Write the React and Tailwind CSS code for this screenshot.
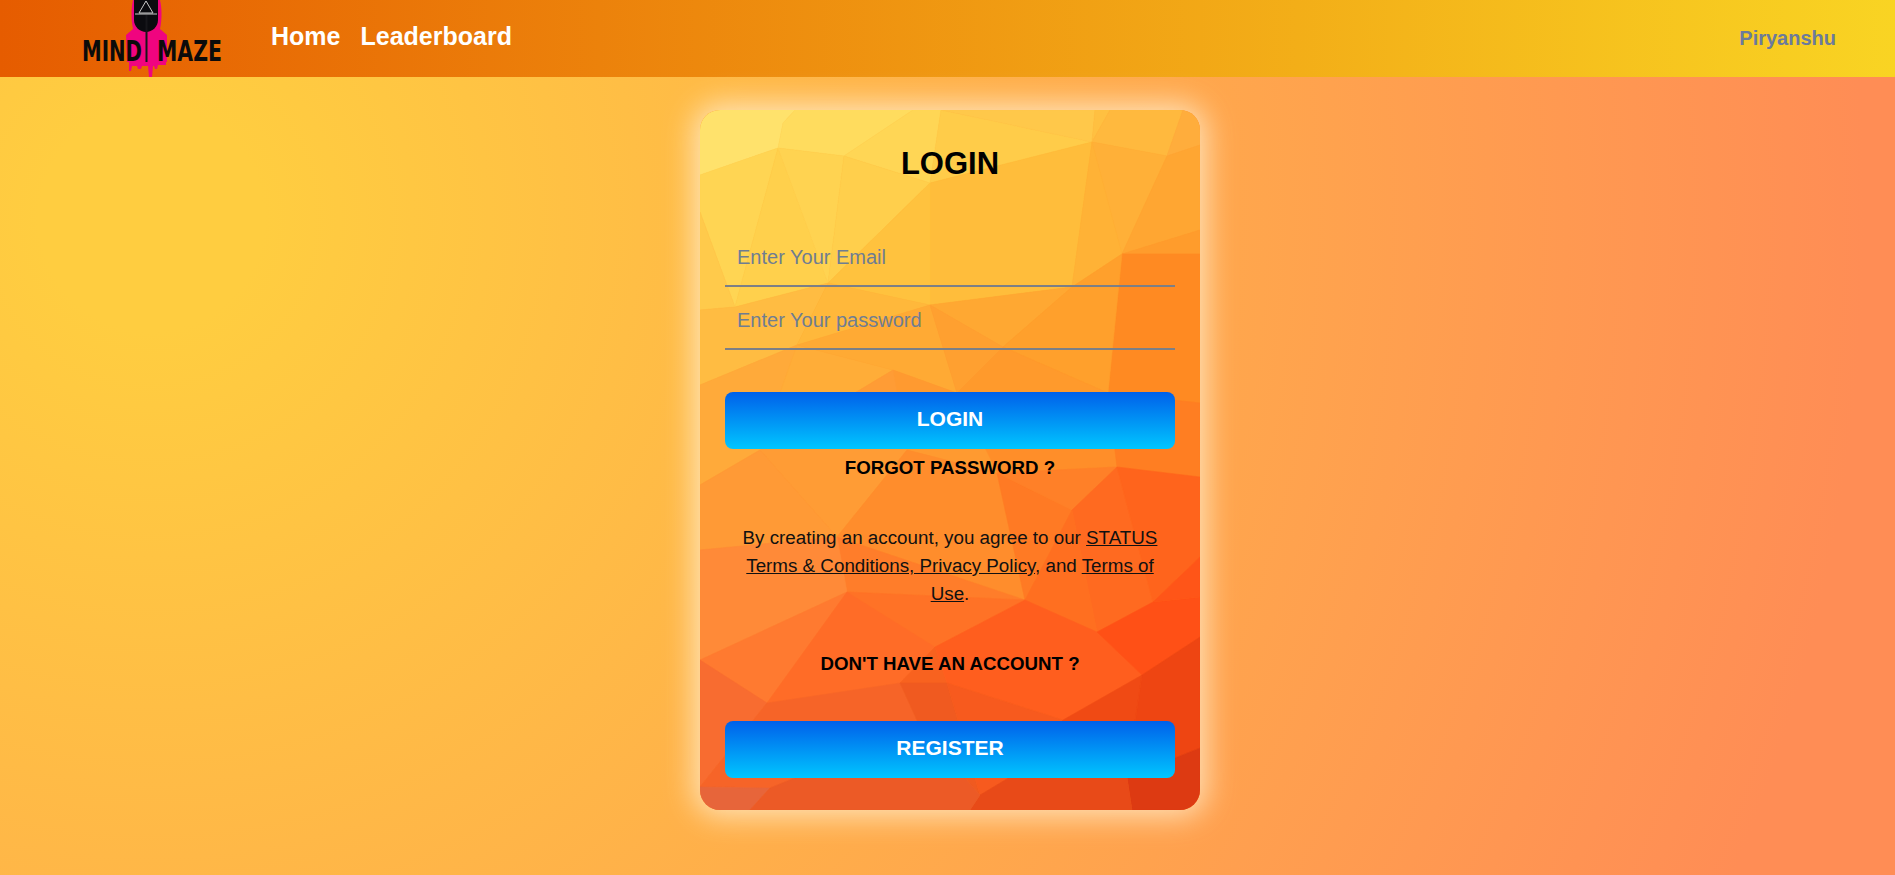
import React from 'react';

// low-poly card background, traced from the picture (500x700 card space)
const facets = [
  ['0,0 95,0 83,13 78,38 0,65', '#ffe26c'],
  ['95,0 213,0 144,46 78,38 83,13', '#ffdc5e'],
  ['213,0 241,0 230,73 144,46', '#ffd655'],
  ['241,0 392,32 230,73', '#ffcc49'],
  ['241,0 395,0 392,32', '#ffc84a'],
  ['395,0 410,0 392,32', '#ffc041'],
  ['410,0 483,0 467,46 392,32', '#ffb93e'],
  ['483,0 500,0 500,35 467,46', '#ffad3c'],
  ['0,65 78,38 35,197 0,102', '#ffd553'],
  ['78,38 128,173 35,197', '#ffd04c'],
  ['78,38 144,46 128,173', '#ffd351'],
  ['144,46 230,73 128,173', '#ffcf4c'],
  ['230,73 392,32 372,177 230,195', '#ffbd3b'],
  ['230,73 230,195 128,173', '#ffc23e'],
  ['392,32 467,46 422,144', '#ffb038'],
  ['392,32 422,144 372,177', '#ffb236'],
  ['467,46 500,35 500,120 422,144', '#ffa632'],
  ['422,144 500,120 500,144', '#ff9c2c'],
  ['422,144 500,144 500,293 408,283', '#ff8a22'],
  ['0,102 35,197 0,200', '#ffca4b'],
  ['0,200 35,197 128,173 97,235 0,275', '#ffbc42'],
  ['128,173 230,195 97,235', '#ffb83b'],
  ['230,195 372,177 303,237', '#ffa832'],
  ['372,177 422,144 408,283 303,237', '#ffa02c'],
  ['0,275 97,235 60,340 0,375', '#ffaa3a'],
  ['97,235 193,260 60,340', '#ffad38'],
  ['193,260 97,235 230,195 257,283', '#ffaa34'],
  ['230,195 303,237 257,283', '#ffa030'],
  ['303,237 408,283 257,283', '#ff9a2c'],
  ['257,283 408,283 417,357 297,363', '#ff8e29'],
  ['408,283 500,293 500,367 417,357', '#ff7e22'],
  ['193,260 257,283 297,363 207,340', '#ff9a30'],
  ['60,340 193,260 207,340 137,427', '#ff9c35'],
  ['0,375 60,340 137,427 0,440', '#ff9a36'],
  ['207,340 297,363 325,490 137,427', '#ff8d2c'],
  ['137,427 325,490 147,482', '#ff7d2a'],
  ['297,363 372,400 325,490', '#ff7a24'],
  ['297,363 417,357 372,400', '#ff8028'],
  ['372,400 417,357 453,492 397,522', '#ff6a20'],
  ['417,357 500,367 500,447 453,492', '#ff641c'],
  ['372,400 397,522 325,490', '#ff6f20'],
  ['0,440 137,427 147,482 0,550', '#ff8a38'],
  ['147,482 325,490 235,537', '#ff7226'],
  ['0,550 147,482 67,593', '#ff7a30'],
  ['147,482 235,537 200,573 67,593', '#ff6c27'],
  ['235,537 247,573 200,573', '#f8621f'],
  ['235,537 325,490 397,522 442,565 363,610 247,573', '#ff5e1e'],
  ['397,522 453,492 500,487 500,527 442,565', '#ff5016'],
  ['453,492 500,447 500,487', '#ff5518'],
  ['0,550 67,593 0,677', '#f86c30'],
  ['67,593 200,573 220,617 70,678 0,677', '#f66428'],
  ['200,573 247,573 280,685 220,617', '#f05a20'],
  ['247,573 363,610 310,667 280,685', '#f75a1e'],
  ['363,610 442,565 427,667 310,667', '#f04a14'],
  ['442,565 500,527 500,638 427,667', '#ee4512'],
  ['427,667 500,638 500,700 432,700', '#dd3a12'],
  ['280,685 310,667 427,667 432,700 270,700', '#e84a18'],
  ['0,677 70,678 50,700 0,700', '#e7653a'],
  ['70,678 220,617 280,685 270,700 50,700', '#ec5a26'],
];

function Logo() {
  return (
    <svg width="145" height="77" viewBox="80 0 145 77" className="shrink-0 overflow-visible">
      {/* hood */}
      <path d="M133 0 C131 8 131 20 133 29 L126 35 L127 62 H167 L167 35 L160 29 C162 20 162 8 160 0 Z" fill="#f0047f" />
      {/* drips */}
      <path d="M129 61 H166 V65 H158 L157 69 H155 L154 66 H153 L152 77 H149 L148 66 H142 L141 69 H138 L137 66 H132 L131 71 H129 Z" fill="#f0047f" />
      {/* mask */}
      <path d="M134 0 H158 L158 20 C158 27 152 32 146 32 C140 32 134 27 134 20 Z" fill="#0b0b0f" />
      <path d="M146 1 L153 13 H139 Z" fill="none" stroke="#c9c9c9" strokeWidth="1" />
      <path d="M135 14 H157" stroke="#c9c9c9" strokeWidth="1" />
      <path d="M146.5 15 V62" stroke="#16161a" strokeWidth="2" />
      <text x="82" y="61" textLength="60" lengthAdjust="spacingAndGlyphs" fontFamily="'DejaVu Sans', sans-serif" fontWeight="700" fontSize="29" fill="#0b0b0b">MIND</text>
      <text x="157" y="61" textLength="65" lengthAdjust="spacingAndGlyphs" fontFamily="'DejaVu Sans', sans-serif" fontWeight="700" fontSize="29" fill="#0b0b0b">MAZE</text>
    </svg>
  );
}

function Field({ placeholder, type }) {
  return (
    <input
      type={type}
      placeholder={placeholder}
      className="w-full h-[63px] px-3 pt-[6px] bg-transparent border-b-2 border-[#7c7f86] outline-none text-[20px] placeholder:text-[#6f7d92]"
    />
  );
}

function GradientButton({ children }) {
  return (
    <button className="w-full h-[57px] pb-[3px] rounded-lg bg-[linear-gradient(to_bottom,#0060ea,#00c6ff)] text-white font-bold text-[21px]">
      {children}
    </button>
  );
}

export default function App() {
  return (
    <div className="min-h-screen font-['Liberation_Sans',Arial,sans-serif] bg-[radial-gradient(circle_at_8%_25%,#ffcd40_0%,#ffcd40_6%,#ff8d55_92%)] overflow-hidden">
      {/* Navbar */}
      <header className="flex items-center h-[77px] pl-20 pr-[59px] overflow-hidden bg-[linear-gradient(to_right,#e65c00,#f9d423)]">
        <Logo />
        <nav className="flex items-center gap-5 ml-[46px] pb-[3px] text-white font-bold text-[25px]">
          <a href="#home">Home</a>
          <a href="#leaderboard">Leaderboard</a>
        </nav>
        <div className="ml-auto pb-[2px] text-[20px] font-bold text-[#6c7a9c]">Piryanshu</div>
      </header>

      {/* Login card */}
      <main className="flex justify-center pt-[33px] pl-[5px]">
        <div className="relative w-[500px] h-[700px] px-[25px] rounded-[20px] bg-[#ff8a2a] shadow-[0_0_30px_6px_rgba(255,236,205,0.85)]">
          <svg viewBox="0 0 500 700" className="absolute inset-0 w-full h-full rounded-[20px]">
            {facets.map(([points, fill], i) => (
              <polygon key={i} points={points} fill={fill} stroke={fill} strokeWidth="0.6" />
            ))}
          </svg>

          <div className="relative flex flex-col text-center text-black">
            <h1 className="mt-[36px] h-[36px] leading-[36px] font-bold text-[31px]">LOGIN</h1>
            <div className="mt-[42px]">
              <Field type="email" placeholder="Enter Your Email" />
              <Field type="password" placeholder="Enter Your password" />
            </div>
            <div className="mt-[42px]">
              <GradientButton>LOGIN</GradientButton>
            </div>
            <a href="#forgot" className="mt-[8px] h-[22px] leading-[22px] font-bold text-[18.7px]">FORGOT PASSWORD ?</a>
            <p className="mt-[45px] px-[12px] text-[18.8px] leading-[28px] text-[#111]">
              By creating an account, you agree to our <a href="#status" className="underline">STATUS Terms &amp; Conditions, Privacy Policy</a>, and <a href="#terms" className="underline">Terms of Use</a>.
            </p>
            <a href="#register" className="mt-[45px] h-[22px] leading-[22px] font-bold text-[18.7px]">DON'T HAVE AN ACCOUNT ?</a>
            <div className="mt-[46px]">
              <GradientButton>REGISTER</GradientButton>
            </div>
          </div>
        </div>
      </main>
    </div>
  );
}
